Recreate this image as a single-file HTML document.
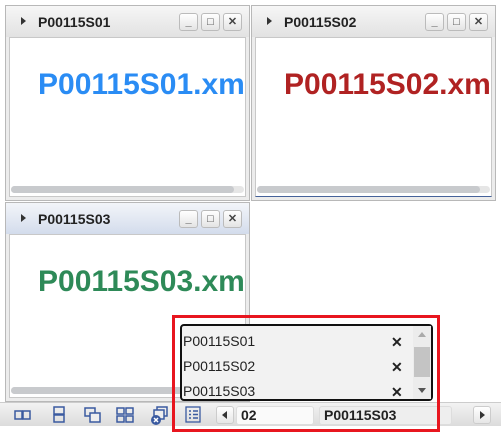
<!DOCTYPE html>
<html><head><style>
*{margin:0;padding:0;box-sizing:border-box}
body{width:501px;height:437px;background:#fff;position:relative;overflow:hidden;font-family:"Liberation Sans",sans-serif}
.desk{position:absolute;left:0;top:0;width:501px;height:402px;background:#fff}
.win{position:absolute;border:1px solid #b8b8b8;background:#ececec}
.tb{position:absolute;left:0;top:0;right:0;height:31px;background:linear-gradient(#f6f6f6,#e2e2e2)}
.tb.act{background:linear-gradient(#f3f5f9,#d3dcec)}
.tri{position:absolute;left:15px;top:11px;width:0;height:0;border-left:5px solid #333;border-top:4px solid transparent;border-bottom:4px solid transparent}
.tt{position:absolute;left:32px;top:8px;font-size:14px;font-weight:bold;color:#222}
.btn{position:absolute;top:7px;width:19px;height:18px;border:1px solid #bbb;border-radius:3px;background:linear-gradient(#fff,#e4e4e4);font-size:11px;color:#444;text-align:center;line-height:16px;font-weight:bold}
.cont{position:absolute;left:3px;top:31px;right:3px;bottom:3px;background:#fff;border:1px solid #c8c8c8;overflow:hidden}
.big{position:absolute;left:28px;top:30px;font-size:30px;font-weight:bold;white-space:nowrap}
.sb{position:absolute;left:1px;right:1px;bottom:3px;height:7px;background:#e6e6e6;border-radius:4px}
.sb i{position:absolute;left:0;top:0;bottom:0;right:10px;background:#c8cacd;border-radius:4px}
.task{position:absolute;left:0;top:402px;width:501px;height:24px;background:linear-gradient(#f3f3f3,#dcdcdc);border-top:1px solid #ccc}
.ic{position:absolute;top:5px;width:18px;height:14px}
.it{position:absolute;top:3px;height:19px;border:1px solid #ddd;border-radius:3px;background:#eee;font-size:14px;font-weight:bold;color:#222;padding-left:4px;line-height:17px}
.ar{position:absolute;top:3px;width:18px;height:18px;border:1px solid #ccc;border-radius:3px;background:linear-gradient(#fff,#e6e6e6)}
</style></head><body>
<div class="desk"></div>
<div class="win" style="left:5px;top:5px;width:245px;height:196px">
 <div class="tb"><div class="tri"></div><div class="tt">P00115S01</div>
 <div class="btn" style="left:173px">_</div><div class="btn" style="left:195px">□</div><div class="btn" style="left:217px">✕</div></div>
 <div class="cont"><div class="big" style="color:#2a8cf4">P00115S01.xm</div><div class="sb"><i></i></div></div>
</div>
<div class="win" style="left:251px;top:5px;width:245px;height:196px">
 <div class="tb"><div class="tri"></div><div class="tt">P00115S02</div>
 <div class="btn" style="left:173px">_</div><div class="btn" style="left:195px">□</div><div class="btn" style="left:217px">✕</div></div>
 <div class="cont" style="border-bottom:1px solid #46629a"><div class="big" style="color:#b02222">P00115S02.xm</div><div class="sb"><i></i></div></div>
</div>
<div class="win" style="left:5px;top:202px;width:245px;height:200px">
 <div class="tb act"><div class="tri"></div><div class="tt">P00115S03</div>
 <div class="btn" style="left:173px">_</div><div class="btn" style="left:195px">□</div><div class="btn" style="left:217px">✕</div></div>
 <div class="cont"><div class="big" style="color:#2e8a58">P00115S03.xm</div><div class="sb"><i></i></div></div>
</div>
<div class="task">
 <svg class="ic" style="left:14px" viewBox="0 0 18 14"><rect x="1" y="3" width="7" height="8" fill="none" stroke="#3a5aa0" stroke-width="1.5"/><rect x="9" y="3" width="7" height="8" fill="none" stroke="#3a5aa0" stroke-width="1.5"/></svg>
 <svg class="ic" style="left:50px;top:3px;height:18px" viewBox="0 0 18 18"><rect x="4" y="1" width="10" height="7" fill="none" stroke="#3a5aa0" stroke-width="1.5"/><rect x="4" y="9" width="10" height="7" fill="none" stroke="#3a5aa0" stroke-width="1.5"/></svg>
 <svg class="ic" style="left:84px;top:3px;height:18px" viewBox="0 0 18 18"><rect x="1" y="2" width="10" height="8" fill="none" stroke="#3a5aa0" stroke-width="1.5"/><rect x="6" y="7" width="10" height="9" fill="#eee" stroke="#3a5aa0" stroke-width="1.5"/></svg>
 <svg class="ic" style="left:116px;top:3px;height:18px" viewBox="0 0 18 18"><rect x="1" y="2" width="7" height="6" fill="none" stroke="#3a5aa0" stroke-width="1.5"/><rect x="10" y="2" width="7" height="6" fill="none" stroke="#3a5aa0" stroke-width="1.5"/><rect x="1" y="10" width="7" height="6" fill="none" stroke="#3a5aa0" stroke-width="1.5"/><rect x="10" y="10" width="7" height="6" fill="none" stroke="#3a5aa0" stroke-width="1.5"/></svg>
 <svg class="ic" style="left:150px;top:3px;height:20px" viewBox="0 0 18 20"><rect x="7" y="1" width="10" height="9" fill="none" stroke="#3a5aa0" stroke-width="1.5"/><rect x="4" y="4" width="10" height="9" fill="#eee" stroke="#3a5aa0" stroke-width="1.5"/><circle cx="6" cy="14" r="5" fill="#3a5aa0"/><path d="M4 12l4 4M8 12l-4 4" stroke="#fff" stroke-width="1.5"/></svg>
 <svg class="ic" style="left:184px;top:2px;height:20px" viewBox="0 0 18 20"><rect x="2" y="2" width="14" height="15" fill="none" stroke="#3a5aa0" stroke-width="1.3"/><path d="M5 6h2M9 6h5M5 9.5h2M9 9.5h5M5 13h2M9 13h5" stroke="#3a5aa0" stroke-width="1.5"/></svg>
 <div class="ar" style="left:216px"><div style="position:absolute;left:5px;top:4px;border-right:5px solid #333;border-top:4px solid transparent;border-bottom:4px solid transparent"></div></div>
 <div class="it" style="left:236px;width:78px;background:#fafafa">02</div>
 <div class="it" style="left:319px;width:133px">P00115S03</div>
 <div class="ar" style="left:473px"><div style="position:absolute;left:6px;top:4px;border-left:5px solid #333;border-top:4px solid transparent;border-bottom:4px solid transparent"></div></div>
</div>
<div style="position:absolute;left:180px;top:324px;width:253px;height:77px;border:2px solid #111;border-radius:4px;background:#f2f2f2;font-size:14px;color:#222">
 <div style="position:absolute;left:1px;top:7px">P00115S01</div>
 <div style="position:absolute;left:1px;top:32px">P00115S02</div>
 <div style="position:absolute;left:1px;top:57px">P00115S03</div>
 <div style="position:absolute;left:209px;top:8px;font-weight:bold">✕</div>
 <div style="position:absolute;left:209px;top:33px;font-weight:bold">✕</div>
 <div style="position:absolute;left:209px;top:58px;font-weight:bold">✕</div>
 <div style="position:absolute;left:231px;top:0;width:18px;height:73px;background:#ececec">
  <div style="position:absolute;left:5px;top:6px;border-bottom:5px solid #aaa;border-left:4px solid transparent;border-right:4px solid transparent"></div>
  <div style="position:absolute;left:1px;top:21px;width:16px;height:30px;background:#c4c4c4"></div>
  <div style="position:absolute;left:5px;top:62px;border-top:5px solid #555;border-left:4px solid transparent;border-right:4px solid transparent"></div>
 </div>
</div>
<div style="position:absolute;left:172px;top:315px;width:268px;height:117px;border:3px solid #e8161f"></div>
</body></html>
